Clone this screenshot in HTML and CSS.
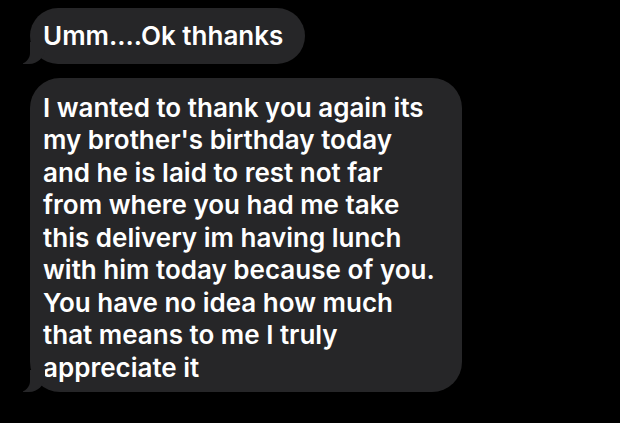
FILE: index.html
```html
<!DOCTYPE html>
<html lang="en">

<head>
    <meta charset="UTF-8">
    <meta name="viewport" content="width=device-width, initial-scale=1.0">
    <title>Messages</title>
    <link rel="stylesheet" href="styles.css">
</head>

<body>
    <div class="thread">
        <!-- Received messages -->
        <div class="bubble short">Umm....Ok thhanks</div>
        <div class="bubble long">I wanted to thank you again its<br>
            my brother's birthday today<br>
            and he is laid to rest not far<br>
            from where you had me take<br>
            this delivery im having lunch<br>
            with him today because of you.<br>
            You have no idea how much<br>
            that means to me I truly<br>
            appreciate it</div>
    </div>
</body>

</html>
```

FILE: styles.css
```css
body {
    font-family: Inter, "Noto Sans", sans-serif;
    background-color: #000;
    margin: 0;
    color: #fff;
}

.thread {
    display: flex;
    flex-direction: column;
    align-items: flex-start;
    gap: 14px;
    padding: 8px 0 0 30px;
}

.bubble {
    position: relative;
    background-color: #262628;
    border-radius: 28px;
    font-size: 26px;
    font-weight: 600;
    line-height: 32.5px;
    white-space: nowrap;
}

.short {
    padding: 12px 22px 11px 13px;
}

.long {
    width: 432px;
    box-sizing: border-box;
    padding: 14px 14px 8px 13px;
    border-radius: 30px;
}

/* tail */
.bubble::before {
    content: "";
    position: absolute;
    bottom: 0;
    left: -7px;
    width: 22px;
    height: 22px;
    background-color: #262628;
    border-bottom-right-radius: 16px;
}

.bubble::after {
    content: "";
    position: absolute;
    bottom: 0;
    left: -14px;
    width: 14px;
    height: 22px;
    background-color: #000;
    border-bottom-right-radius: 11px;
}
```
